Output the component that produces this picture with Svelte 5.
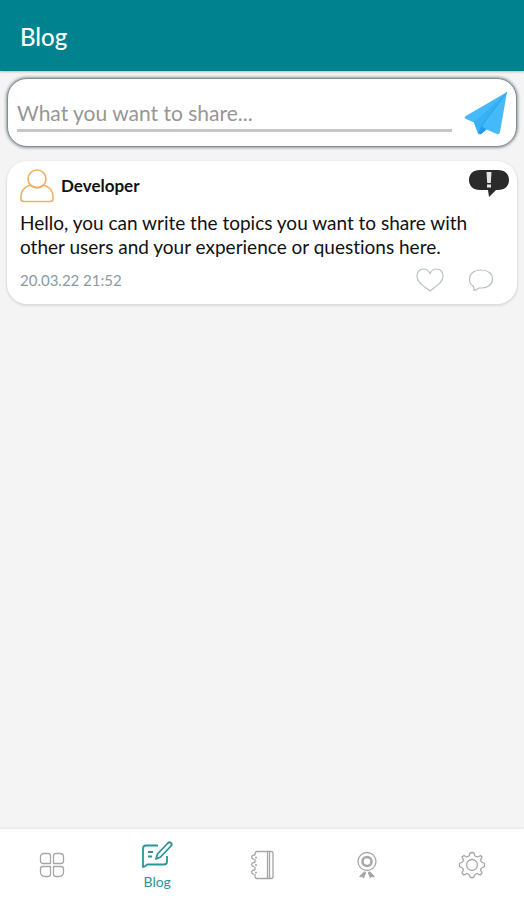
<script lang="ts">
	type Post = { id: number; author: string; text: string; date: string };

	let draft = $state('');
	let liked = $state(false);
	let active = $state('blog');

	let posts = $state<Post[]>([
		{
			id: 1,
			author: 'Developer',
			text: 'Hello, you can write the topics you want to share with other users and your experience or questions here.',
			date: '20.03.22 21:52'
		}
	]);

	const tabs = [
		{ id: 'home', label: 'Home' },
		{ id: 'blog', label: 'Blog' },
		{ id: 'notes', label: 'Notes' },
		{ id: 'awards', label: 'Awards' },
		{ id: 'settings', label: 'Settings' }
	];

	function share(e: SubmitEvent) {
		e.preventDefault();
		if (!draft.trim()) return;
		posts.unshift({ id: Date.now(), author: 'You', text: draft, date: 'now' });
		draft = '';
	}
</script>

<div class="app">
	<header class="app-bar">
		<h1>Blog</h1>
	</header>

	<main>
		<form class="composer" onsubmit={share}>
			<input type="text" bind:value={draft} placeholder="What you want to share..." aria-label="What you want to share" />
			<button type="submit" class="send" aria-label="Send">
				<svg width="44" height="46" viewBox="0 0 44 46">
					<path d="M43 2 1 26.500Q0 28 2 29L10 32.500 14 43Q15 45 17 44L22.500 39.500 33 44Q35 45 36 42Z" fill="#45bafb" />
					<path d="M43 2 10 32.500 14 43Q15 45 17 44L17.500 36Z" fill="#38b0f5" />
					<path d="M17.500 36 22.500 39.500 17 44 14 43Z" fill="#1f9de8" />
					<path d="M43 2 17.500 36" fill="none" stroke="#2f9ad8" stroke-width=".8" />
				</svg>
			</button>
		</form>

		{#each posts as post (post.id)}
			<article class="post">
				<div class="post-head">
					<svg width="34" height="34" viewBox="0 0 34 34" fill="none" stroke="#efb069" stroke-width="1.600">
						<circle cx="17" cy="10" r="9" />
						<path d="M10.500 16C4 18 1 23 1 28V30Q1 32.500 4 32.500H30Q33 32.500 33 30V28C33 23 30 18 23.500 16Q17 21 10.500 16Z" />
					</svg>
					<h2>{post.author}</h2>
					<button type="button" class="report" aria-label="Report post">
						<svg width="42" height="28" viewBox="0 0 42 28">
							<path d="M12 1H30C37 1 41 5 41 11S37 21 30 21H28L21 28 20 21H12C5 21 1 17 1 11S5 1 12 1Z" fill="#2b2b2b" />
							<path d="M18.500 3H23.500L22.800 14H19.200ZM19 15.500H23V18.500H19Z" fill="#e6e6e6" />
						</svg>
					</button>
				</div>
				<p>{post.text}</p>
				<div class="post-foot">
					<time>{post.date}</time>
					<div class="actions">
						<button type="button" class:liked aria-label="Like" onclick={() => (liked = !liked)}>
							<svg width="28" height="24" viewBox="0 0 28 24">
								<path d="M14 5.500C12.500 2.500 10.500 1 7.500 1 3.500 1 1 4 1 8 1 14.500 8 18 14 23 20 18 27 14.500 27 8 27 4 24.500 1 20.500 1 17.500 1 15.500 2.500 14 5.500Z" />
							</svg>
						</button>
						<button type="button" aria-label="Comment">
							<svg width="26" height="24" viewBox="0 0 26 24">
								<path d="M6 22.500Q6.500 21 5.500 18.500C3 17 1.500 14.500 1.500 11.500 1.500 5.500 6 2 13 2S24.500 5.500 24.500 11 20 20 13.500 20H11Q8.500 22 6 22.500Z" />
							</svg>
						</button>
					</div>
				</div>
			</article>
		{/each}
	</main>

	<nav>
		{#each tabs as tab}
			<button
				type="button"
				class="tab"
				class:active={active === tab.id}
				aria-label={tab.label}
				onclick={() => (active = tab.id)}
			>
				{#if tab.id === 'home'}
					<svg width="26" height="26" viewBox="0 0 26 26">
						<path d="M5 1.500H9Q11.500 1.500 11.500 4V11.500H4Q1.500 11.500 1.500 9V5Q1.500 1.500 5 1.500ZM17 1.500H21Q24.500 1.500 24.500 5V9Q24.500 11.500 22 11.500H14.500V4Q14.500 1.500 17 1.500ZM4 14.500H11.500V22Q11.500 24.500 9 24.500H6Q1.500 24.500 1.500 20V17Q1.500 14.500 4 14.500ZM14.500 14.500H22Q24.500 14.500 24.500 17V20Q24.500 24.500 20 24.500H17Q14.500 24.500 14.500 22Z" />
					</svg>
				{:else if tab.id === 'blog'}
					<svg width="32" height="30" viewBox="0 0 32 30">
						<path d="M17 5.500H5Q2 5.500 2 8.500V27Q4 27 6 24.500H23Q26 24.500 26 21.500V16M7 12H12M7 16.500H11M15 19 16.500 14 27 3Q28.500 1.500 30 3 31.500 4.500 30 6L19.500 17Z" />
					</svg>
				{:else if tab.id === 'notes'}
					<svg width="26" height="30" viewBox="0 0 26 30">
						<path d="M6 5V4Q6 1.500 8 1.500H22Q24 1.500 24 3.500V26.500Q24 28.500 22 28.500H8Q6 28.500 6 26.500V24M6 9V12.500M6 16.500V20M18.500 1.500V28.500M20.500 1.500V28.500" />
						<path d="M8 7.500H6M5 9A2 2 0 1 1 6 5.500M8 15H6M5 16.500A2 2 0 1 1 6 13M8 22.500H6M5 24A2 2 0 1 1 6 20.500" />
					</svg>
				{:else if tab.id === 'awards'}
					<svg width="22" height="28" viewBox="0 0 22 28">
						<circle cx="11" cy="10.500" r="9" />
						<circle cx="11" cy="10.500" r="4.500" stroke-width="2.500" />
						<path d="M8.500 21 4 25.500 6.500 25 7.500 26.500 9.500 22ZM13.500 21 18 25.500 15.500 25 14.500 26.500 12.500 22Z" fill="#a6a6a6" />
					</svg>
				{:else}
					<svg width="28" height="28" viewBox="0 0 28 28">
						<circle cx="14" cy="14" r="5.500" />
						<path d="M14 1.500 16 2 17 5 19.500 6 22.500 4.500 24 6 22.500 9 23.500 11 26.500 12.500V15.500L23.500 17 22.500 19 24 22 22 24 19 22.500 17 23.500 15.500 26.500H12.500L11 23.500 9 22.500 6 24 4 22 5.500 19 4.500 17 1.500 15.500V12.500L4.500 11 5.500 9 4 6 6 4.500 8.500 6 11 5 12 2Z" />
					</svg>
				{/if}
				{#if active === tab.id}
					<span>{tab.label}</span>
				{/if}
			</button>
		{/each}
	</nav>
</div>

<style>
	:global(body) {
		margin: 0;
		background: #f4f4f4;
	}

	.app {
		display: flex;
		flex-direction: column;
		min-height: 100vh;
		font-family: Lato, 'Liberation Sans', sans-serif;
		font-variant-ligatures: none;
		color: #111;
	}

	h1,
	h2,
	p {
		margin: 0;
	}

	button {
		display: flex;
		padding: 0;
		border: 0;
		background: none;
		font: inherit;
		cursor: pointer;
	}

	.app-bar {
		padding: 21px 20px 18px;
		background: #00838f;
		box-shadow: 0 1px 2px #bbb;
		color: #fff;
	}

	.app-bar h1 {
		font-size: 24px;
		line-height: 32px;
		font-weight: 500;
	}

	main {
		flex: 1;
		display: flex;
		flex-direction: column;
		gap: 14px;
		padding: 7px 7px 20px;
	}

	.composer {
		display: flex;
		align-items: center;
		gap: 12px;
		padding: 11px 8px 10px 9px;
		border: 1px solid #7f8f92;
		border-radius: 20px;
		background: #fff;
		box-shadow: 0 0 3px 1px #8b999c;
	}

	.composer input {
		flex: 1;
		min-width: 0;
		height: 36px;
		box-sizing: border-box;
		padding: 0;
		border: 0;
		border-bottom: 3px solid #c6c6c6;
		background: none;
		font: inherit;
		font-size: 21px;
		outline: none;
		align-self: flex-end;
		margin-bottom: 4px;
	}

	.composer input::placeholder {
		color: #969696;
		opacity: 1;
	}

	.post {
		padding: 8px 7px 12px 13px;
		border-radius: 20px;
		background: #fff;
		box-shadow: 0 1px 2px 1px #dcdcdc;
	}

	.post-head {
		display: flex;
		align-items: center;
		gap: 7px;
	}

	.post-head h2 {
		flex: 1;
		font-size: 17px;
		line-height: 24px;
		font-weight: 700;
	}

	.report {
		align-self: flex-start;
	}

	.post p {
		margin-top: 8px;
		padding-right: 24px;
		font-size: 19px;
		line-height: 24px;
	}

	.post-foot {
		display: flex;
		align-items: center;
		justify-content: space-between;
		margin-top: 9px;
		padding-right: 16px;
	}

	.post-foot time {
		font-size: 15px;
		color: #8b9a9f;
	}

	.actions {
		display: flex;
		gap: 24px;
	}

	.actions svg {
		fill: none;
		stroke: #b9c1c3;
		stroke-width: 1.2;
	}

	.actions .liked svg {
		fill: #e57373;
	}

	nav {
		display: flex;
		height: 71px;
		background: #fff;
		box-shadow: 0 -1px 2px #e8e8e8;
	}

	.tab {
		flex: 1;
		flex-direction: column;
		align-items: center;
		justify-content: center;
		color: #a6a6a6;
	}

	.tab svg {
		fill: none;
		stroke: currentColor;
		stroke-width: 1.3;
		stroke-linejoin: round;
	}

	.tab.active {
		padding-top: 4px;
		color: #2b939c;
	}

	.tab.active svg {
		stroke-width: 1.8;
	}

	.tab span {
		font-size: 14px;
		line-height: 24px;
	}
</style>
